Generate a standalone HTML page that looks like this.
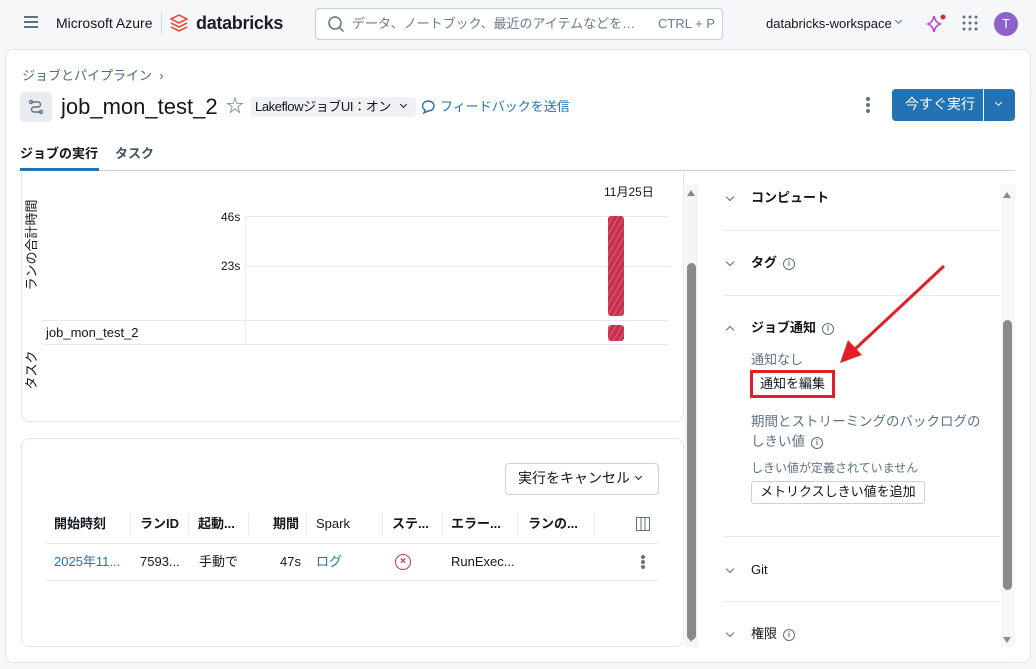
<!DOCTYPE html>
<html><head><meta charset="utf-8"><style>
*{box-sizing:border-box;margin:0;padding:0}
body{width:1036px;height:669px;overflow:hidden;background:#f6f7f9;font-family:"Liberation Sans","Noto Sans CJK JP",sans-serif;color:#11171c;position:relative;font-size:13px}
.a{position:absolute;white-space:nowrap;line-height:18px}
.card{position:absolute;background:#fff;border:1px solid #e3e6ea;border-radius:8px}
.hl{position:absolute;height:1px;background:#e8eaed}
.vl{position:absolute;width:1px;background:#e8eaed}
.chev{position:absolute;width:6px;height:6px;border-right:1.5px solid #5f7281;border-bottom:1.5px solid #5f7281;transform:rotate(45deg)}
.info{display:inline-block;width:12px;height:12px;border:1.3px solid #5f7281;border-radius:50%;font-size:8px;line-height:10px;text-align:center;color:#5f7281;font-weight:bold;vertical-align:1px;margin-left:6px}
.sec{font-weight:bold;font-size:13px}
.th{font-weight:bold;font-size:13px;top:515px}
.td{top:553px}
</style></head><body>
<!-- top bar -->
<div class="a" style="left:24px;top:16px;width:14px;height:2px;background:#5f7281;box-shadow:0 5px 0 #5f7281,0 10px 0 #5f7281"></div>
<div class="a" style="left:56px;top:14px;font-size:14px">Microsoft Azure</div>
<div class="a" style="left:161px;top:12px;width:1px;height:22px;background:#d5dade"></div>
<svg class="a" style="left:170px;top:14px" width="18" height="18" viewBox="0 0 18 18"><path d="M1 5l8-4 8 4-8 4z M1 9l8 4 8-4 M1 13l8 4 8-4" fill="none" stroke="#ee4a3a" stroke-width="1.6"/></svg>
<div class="a" style="left:196px;top:12px;font-size:18px;line-height:22px;font-weight:bold;color:#1b1f23;letter-spacing:-0.3px">databricks</div>
<div class="a" style="left:315px;top:8px;width:408px;height:32px;border:1px solid #c9d0d6;border-radius:4px;background:#fff"></div>
<svg class="a" style="left:327px;top:15px" width="18" height="18"><circle cx="8" cy="8" r="6" fill="none" stroke="#5f7281" stroke-width="1.5"/><path d="M12.5 12.5l4 4" stroke="#5f7281" stroke-width="1.5"/></svg>
<div class="a" style="left:352px;top:15px;font-size:13px;color:#6b7b88;width:296px;overflow:hidden;text-overflow:ellipsis">データ、ノートブック、最近のアイテムなどを検索します</div>
<div class="a" style="left:658px;top:15px;font-size:13px;color:#6b7b88">CTRL + P</div>
<div class="a" style="left:766px;top:15px;font-size:13px">databricks-workspace</div>
<div class="chev" style="left:896px;top:18px;width:5px;height:5px;border-width:1.2px"></div>
<svg class="a" style="left:925px;top:13px" width="22" height="22"><path d="M9 3 Q10 9 15 11 Q10 13 9 19 Q8 13 3 11 Q8 9 9 3z" fill="none" stroke="#b845e0" stroke-width="1.6"/><circle cx="18" cy="4" r="2.5" fill="#e0263e"/></svg>
<svg class="a" style="left:962px;top:15px" width="16" height="16"><g fill="#5f7281"><circle cx="2" cy="2" r="1.5"/><circle cx="8" cy="2" r="1.5"/><circle cx="14" cy="2" r="1.5"/><circle cx="2" cy="8" r="1.5"/><circle cx="8" cy="8" r="1.5"/><circle cx="14" cy="8" r="1.5"/><circle cx="2" cy="14" r="1.5"/><circle cx="8" cy="14" r="1.5"/><circle cx="14" cy="14" r="1.5"/></g></svg>
<div class="a" style="left:994px;top:12px;width:24px;height:24px;border-radius:50%;background:#8f62c8;color:#fff;font-size:13px;text-align:center;line-height:24px">T</div>

<!-- main card -->
<div class="card" style="left:5px;top:49px;width:1026px;height:614px;border-radius:8px"></div>
<div class="a" style="left:22px;top:67px;font-size:13px;color:#4f6a80">ジョブとパイプライン &nbsp;›</div>
<div class="a" style="left:20px;top:92px;width:32px;height:30px;background:#e8ecf0;border-radius:4px"></div>
<svg class="a" style="left:28px;top:99px" width="16" height="16"><path d="M3 3h7a2.5 2.5 0 010 5H6a2.5 2.5 0 000 5h7" fill="none" stroke="#5f7281" stroke-width="1.4"/><circle cx="3" cy="3" r="1.6" fill="none" stroke="#5f7281" stroke-width="1.2"/><circle cx="13" cy="13" r="1.6" fill="none" stroke="#5f7281" stroke-width="1.2"/></svg>
<div class="a" style="left:61px;top:93px;font-size:22px;line-height:28px;font-weight:500">job_mon_test_2</div>
<div class="a" style="left:226px;top:95px;font-size:18px;line-height:22px;color:#5f7281">☆</div>
<div class="a" style="left:251px;top:97px;width:165px;height:20px;background:#eef0f2;border-radius:3px"></div>
<div class="a" style="left:255px;top:98px;font-size:13px;letter-spacing:-0.4px">LakeflowジョブUI：オン</div>
<div class="chev" style="left:401px;top:102px;width:5px;height:5px;border-color:#11171c"></div>
<svg class="a" style="left:420px;top:99px" width="16" height="16"><path d="M8 2a6 5 0 110 10l-4 2 1-3A6 5 0 018 2z" fill="none" stroke="#2272b4" stroke-width="1.4"/></svg>
<div class="a" style="left:440px;top:98px;font-size:13px;color:#2272b4">フィードバックを送信</div>
<div class="a" style="left:866px;top:97px;width:4px;height:4px;border-radius:50%;background:#5f7281;box-shadow:0 6px 0 #5f7281,0 12px 0 #5f7281"></div>
<div class="a" style="left:892px;top:89px;width:123px;height:32px;background:#2272b4;border-radius:4px"></div>
<div class="a" style="left:983px;top:89px;width:1px;height:32px;background:#fff"></div>
<div class="a" style="left:905px;top:95px;color:#fff;font-size:14px">今すぐ実行</div>
<div class="chev" style="left:996px;top:100px;width:5px;height:5px;border-color:#fff"></div>
<div class="a" style="left:20px;top:145px;font-weight:bold;font-size:13px">ジョブの実行</div>
<div class="a" style="left:115px;top:145px;font-weight:bold;font-size:13px;color:#445461">タスク</div>
<div class="hl" style="left:20px;top:170px;width:995px;background:#c7d0d9"></div>
<div class="a" style="left:20px;top:168px;width:79px;height:3px;background:#2272b4"></div>

<!-- chart card -->
<div class="a" style="left:21px;top:172px;width:663px;height:250px;background:#fff;border:1px solid #e3e6ea;border-top:none;border-radius:0 0 8px 8px"></div>
<div class="a" style="left:604px;top:183px;font-size:12px">11月25日</div>
<div class="a" style="left:-28px;top:236px;width:120px;text-align:center;font-size:13px;transform:rotate(-90deg)">ランの合計時間</div>
<div class="a" style="left:-28px;top:361px;width:120px;text-align:center;font-size:13px;transform:rotate(-90deg)">タスク</div>
<div class="a" style="left:221px;top:208px;font-size:12px">46s</div>
<div class="a" style="left:221px;top:257px;font-size:12px">23s</div>
<div class="hl" style="left:245px;top:216px;width:424px"></div>
<div class="hl" style="left:245px;top:266px;width:424px"></div>
<div class="hl" style="left:42px;top:320px;width:627px"></div>
<div class="hl" style="left:42px;top:344px;width:627px"></div>
<div class="vl" style="left:245px;top:216px;height:128px"></div>
<div class="a" style="left:46px;top:324px;font-size:13px">job_mon_test_2</div>
<div class="a" style="left:608px;top:216px;width:16px;height:100px;border-radius:3px;background:repeating-linear-gradient(-60deg,#c8304e 0 4px,#d96078 4px 5px)"></div>
<div class="a" style="left:608px;top:325px;width:16px;height:16px;border-radius:3px;background:repeating-linear-gradient(-60deg,#c8304e 0 4px,#d96078 4px 5px)"></div>

<!-- left scrollbar -->
<div class="a" style="left:685px;top:185px;width:13px;height:462px;background:#f5f5f5"></div>
<div class="a" style="left:687px;top:263px;width:9px;height:377px;background:#8a8a8a;border-radius:5px"></div>
<div class="a" style="left:687px;top:190px;border:4px solid transparent;border-bottom:6px solid #8a8a8a;border-top:none"></div>
<div class="a" style="left:687px;top:636px;border:4px solid transparent;border-top:6px solid #8a8a8a;border-bottom:none"></div>

<!-- table card -->
<div class="card" style="left:21px;top:438px;width:663px;height:209px"></div>
<div class="a" style="left:505px;top:463px;width:154px;height:32px;border:1px solid #c9d0d6;border-radius:4px"></div>
<div class="a" style="left:518px;top:469px;font-size:14px">実行をキャンセル</div>
<div class="chev" style="left:636px;top:474px;width:5px;height:5px;border-color:#11171c"></div>
<div class="a th" style="left:54px">開始時刻</div>
<div class="a th" style="left:140px">ランID</div>
<div class="a th" style="left:198px">起動...</div>
<div class="a th" style="left:273px">期間</div>
<div class="a" style="left:316px;top:515px">Spark</div>
<div class="a th" style="left:392px">ステ...</div>
<div class="a th" style="left:451px">エラー...</div>
<div class="a th" style="left:528px">ランの...</div>
<div class="vl" style="left:130px;top:513px;height:22px"></div>
<div class="vl" style="left:188px;top:513px;height:22px"></div>
<div class="vl" style="left:248px;top:513px;height:22px"></div>
<div class="vl" style="left:306px;top:513px;height:22px"></div>
<div class="vl" style="left:382px;top:513px;height:22px"></div>
<div class="vl" style="left:442px;top:513px;height:22px"></div>
<div class="vl" style="left:517px;top:513px;height:22px"></div>
<div class="vl" style="left:594px;top:513px;height:22px"></div>
<svg class="a" style="left:636px;top:517px" width="14" height="14"><rect x="0.5" y="0.5" width="13" height="13" fill="none" stroke="#5f7281"/><path d="M5 1v12M9 1v12" stroke="#5f7281"/></svg>
<div class="hl" style="left:45px;top:543px;width:614px"></div>
<div class="a td" style="left:54px;color:#2272b4">2025年11...</div>
<div class="a td" style="left:140px">7593...</div>
<div class="a td" style="left:199px">手動で</div>
<div class="a td" style="left:280px">47s</div>
<div class="a td" style="left:316px;color:#2272b4">ログ</div>
<div class="a" style="left:395px;top:554px;width:16px;height:16px;border:1.6px solid #c8304e;border-radius:50%;color:#c8304e;font-size:10px;font-weight:bold;text-align:center;line-height:13px">×</div>
<div class="a td" style="left:451px">RunExec...</div>
<div class="a" style="left:641px;top:555px;width:4px;height:4px;border-radius:50%;background:#5f7281;box-shadow:0 5px 0 #5f7281,0 10px 0 #5f7281"></div>
<div class="hl" style="left:45px;top:580px;width:614px"></div>

<!-- right panel -->
<div class="chev" style="left:727px;top:194px"></div>
<div class="a sec" style="left:751px;top:189px">コンピュート</div>
<div class="hl" style="left:723px;top:230px;width:277px"></div>
<div class="chev" style="left:727px;top:259px"></div>
<div class="a sec" style="left:751px;top:254px">タグ<span class="info">i</span></div>
<div class="hl" style="left:723px;top:295px;width:277px"></div>
<div class="chev" style="left:727px;top:327px;transform:rotate(225deg)"></div>
<div class="a sec" style="left:751px;top:319px">ジョブ通知<span class="info">i</span></div>
<div class="a" style="left:751px;top:351px;color:#5f7281;font-size:13px">通知なし</div>
<div class="a" style="left:750px;top:370px;width:85px;height:28px;border:3px solid #e21f26"></div>
<div class="a" style="left:760px;top:375px;font-size:13px">通知を編集</div>
<div class="a" style="left:751px;top:412px;color:#5f7281;font-size:13.5px;line-height:20px">期間とストリーミングのバックログの<br>しきい値<span class="info">i</span></div>
<div class="a" style="left:751px;top:459px;color:#5f7281;font-size:12px">しきい値が定義されていません</div>
<div class="a" style="left:751px;top:481px;width:174px;height:23px;border:1px solid #c9d0d6;border-radius:3px"></div>
<div class="a" style="left:760px;top:483px;font-size:13px">メトリクスしきい値を追加</div>
<div class="hl" style="left:723px;top:536px;width:277px"></div>
<div class="chev" style="left:727px;top:566px"></div>
<div class="a" style="left:751px;top:561px;font-size:13px">Git</div>
<div class="hl" style="left:723px;top:601px;width:277px"></div>
<div class="chev" style="left:727px;top:630px"></div>
<div class="a sec" style="left:751px;top:625px;font-weight:normal">権限<span class="info">i</span></div>
<!-- right scrollbar -->
<div class="a" style="left:1001px;top:185px;width:14px;height:462px;background:#f7f7f7"></div>
<div class="a" style="left:1003px;top:320px;width:9px;height:270px;background:#8a8a8a;border-radius:5px"></div>
<div class="a" style="left:1003px;top:192px;border:4px solid transparent;border-bottom:6px solid #8a8a8a;border-top:none"></div>
<div class="a" style="left:1003px;top:637px;border:4px solid transparent;border-top:6px solid #8a8a8a;border-bottom:none"></div>

<!-- red arrow -->
<svg class="a" style="left:830px;top:260px" width="120" height="110"><path d="M114 6L22 92" stroke="#e21f26" stroke-width="3"/><path d="M10 103L18 80 32 95z" fill="#e21f26"/></svg>
</body></html>
